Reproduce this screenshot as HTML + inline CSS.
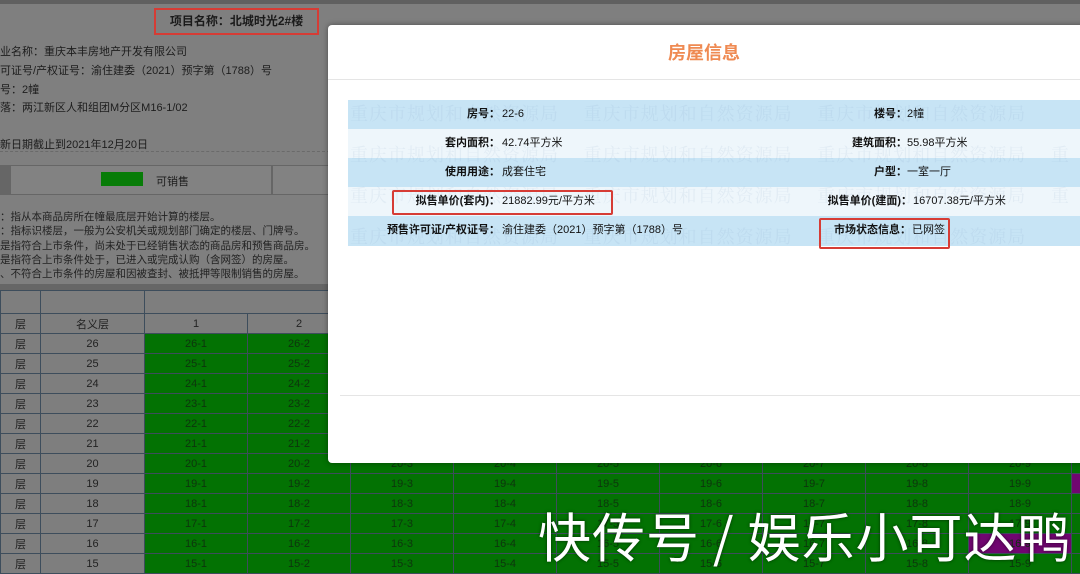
<!DOCTYPE html>
<html><head><meta charset="utf-8"><style>
*{margin:0;padding:0;box-sizing:border-box}
body{width:1080px;height:569px;overflow:hidden;position:relative;background:#7e7e7e;font-family:"Liberation Sans","Noto Sans CJK SC",sans-serif;color:#1a1a1a}
.top{position:absolute;left:0;top:0;width:1080px;height:290px;background:#7f7f7f;border-top:4px solid #606060}
.t{position:absolute;font-size:11px;color:#1d1d1d;white-space:nowrap}
.ttl{position:absolute;left:154px;top:4px;width:165px;height:27px;border:2px solid #d63c35;font-size:12px;font-weight:bold;text-align:center;line-height:23px}
.tab{position:absolute;top:161px;height:30px;border:1px solid #666;background:#828282}
.leg{position:absolute;font-size:10.5px;color:#222;left:0;line-height:14.3px;top:206px}
.band{position:absolute;left:0;top:284px;width:330px;height:8px;background:#666}
table.g{position:absolute;left:0;top:290px;border-collapse:collapse;table-layout:fixed;width:1091px}
table.g td{border:1px solid #3d4d5c;height:20px;font-size:11px;text-align:center;color:#222;padding:0;overflow:hidden;white-space:nowrap;background:#7e7e7e}
table.g tr.h td{height:23px}
table.g td.gr{background:#037203;color:#0d350d}
table.g td.pu{background:#700670;color:#0d350d}
.modal{position:absolute;left:328px;top:25px;width:760px;height:438px;background:#fff;border-radius:4px;box-shadow:0 0 6px rgba(0,0,0,.4)}
.mh{height:55px;border-bottom:1px solid #e5e5e5;text-align:center;font-size:18px;font-weight:bold;color:#ef8a52;line-height:56px;padding-right:8px}
.row{position:absolute;left:20px;width:740px;height:29px;font-size:11px;line-height:29px;white-space:nowrap}
.b{background:#c7e4f5}.l{background:#eef6fb}
.k{position:absolute;font-weight:bold;text-align:right;color:#111}
.v{position:absolute;color:#111}
.wm{position:absolute;font-size:18px;color:rgba(120,150,190,.10);white-space:nowrap;font-family:"Noto Serif CJK SC",serif;letter-spacing:1px}
.box{position:absolute;border:2px solid #d63c35;border-radius:2px}
.ft{position:absolute;left:12px;top:370px;width:740px;height:1px;background:#e5e5e5}
.big{position:absolute;left:538px;top:505px;font-size:53px;color:#fff;white-space:nowrap;font-family:"Noto Sans CJK SC",sans-serif;text-shadow:0 0 3px rgba(0,0,0,.6);letter-spacing:1px;line-height:60px}
</style></head><body>
<div class="top">
<div class="t" style="left:0;top:39px">业名称：重庆本丰房地产开发有限公司</div>
<div class="t" style="left:0;top:58px">可证号/产权证号：渝住建委（2021）预字第（1788）号</div>
<div class="t" style="left:0;top:77px">号：2幢</div>
<div class="t" style="left:0;top:95px">落：两江新区人和组团M分区M16-1/02</div>
<div class="t" style="left:0;top:132px">新日期截止到2021年12月20日</div>
<div style="position:absolute;left:0;top:147px;width:330px;border-top:1px dashed #6a6a6a"></div>
<div class="tab" style="left:-2px;width:12px;background:#666"></div>
<div class="tab" style="left:10px;width:262px"><div style="position:absolute;left:90px;top:6px;width:42px;height:14px;background:#087c08"></div><div class="t" style="left:145px;top:7px;font-size:11px">可销售</div></div>
<div class="tab" style="left:272px;width:60px"></div>
<div class="leg">：指从本商品房所在幢最底层开始计算的楼层。<br>：指标识楼层，一般为公安机关或规划部门确定的楼层、门牌号。<br>是指符合上市条件，尚未处于已经销售状态的商品房和预售商品房。<br>是指符合上市条件处于，已进入或完成认购（含网签）的房屋。<br>、不符合上市条件的房屋和因被查封、被抵押等限制销售的房屋。</div>
<div class="ttl">项目名称：北城时光2#楼</div>
</div>
<div class="band"></div>
<table class="g">
<colgroup><col style="width:40px"><col style="width:104px"><col style="width:103px"><col style="width:103px"><col style="width:103px"><col style="width:103px"><col style="width:103px"><col style="width:103px"><col style="width:103px"><col style="width:103px"><col style="width:103px"><col style="width:20px"></colgroup>
<tr class="h"><td></td><td></td><td colspan="10"></td></tr>
<tr><td>层</td><td>名义层</td><td>1</td><td>2</td><td>3</td><td>4</td><td>5</td><td>6</td><td>7</td><td>8</td><td>9</td><td></td></tr>
<tr><td>层</td><td>26</td><td class="gr">26-1</td><td class="gr">26-2</td><td class="gr">26-3</td><td class="gr">26-4</td><td class="gr">26-5</td><td class="gr">26-6</td><td class="gr">26-7</td><td class="gr">26-8</td><td class="gr">26-9</td><td class="gr"></td></tr>
<tr><td>层</td><td>25</td><td class="gr">25-1</td><td class="gr">25-2</td><td class="gr">25-3</td><td class="gr">25-4</td><td class="gr">25-5</td><td class="gr">25-6</td><td class="gr">25-7</td><td class="gr">25-8</td><td class="gr">25-9</td><td class="gr"></td></tr>
<tr><td>层</td><td>24</td><td class="gr">24-1</td><td class="gr">24-2</td><td class="gr">24-3</td><td class="gr">24-4</td><td class="gr">24-5</td><td class="gr">24-6</td><td class="gr">24-7</td><td class="gr">24-8</td><td class="gr">24-9</td><td class="gr"></td></tr>
<tr><td>层</td><td>23</td><td class="gr">23-1</td><td class="gr">23-2</td><td class="gr">23-3</td><td class="gr">23-4</td><td class="gr">23-5</td><td class="gr">23-6</td><td class="gr">23-7</td><td class="gr">23-8</td><td class="gr">23-9</td><td class="gr"></td></tr>
<tr><td>层</td><td>22</td><td class="gr">22-1</td><td class="gr">22-2</td><td class="gr">22-3</td><td class="gr">22-4</td><td class="gr">22-5</td><td class="gr">22-6</td><td class="gr">22-7</td><td class="gr">22-8</td><td class="gr">22-9</td><td class="gr"></td></tr>
<tr><td>层</td><td>21</td><td class="gr">21-1</td><td class="gr">21-2</td><td class="gr">21-3</td><td class="gr">21-4</td><td class="gr">21-5</td><td class="gr">21-6</td><td class="gr">21-7</td><td class="gr">21-8</td><td class="gr">21-9</td><td class="gr"></td></tr>
<tr><td>层</td><td>20</td><td class="gr">20-1</td><td class="gr">20-2</td><td class="gr">20-3</td><td class="gr">20-4</td><td class="gr">20-5</td><td class="gr">20-6</td><td class="gr">20-7</td><td class="gr">20-8</td><td class="gr">20-9</td><td class="gr"></td></tr>
<tr><td>层</td><td>19</td><td class="gr">19-1</td><td class="gr">19-2</td><td class="gr">19-3</td><td class="gr">19-4</td><td class="gr">19-5</td><td class="gr">19-6</td><td class="gr">19-7</td><td class="gr">19-8</td><td class="gr">19-9</td><td class="pu"></td></tr>
<tr><td>层</td><td>18</td><td class="gr">18-1</td><td class="gr">18-2</td><td class="gr">18-3</td><td class="gr">18-4</td><td class="gr">18-5</td><td class="gr">18-6</td><td class="gr">18-7</td><td class="gr">18-8</td><td class="gr">18-9</td><td class="gr"></td></tr>
<tr><td>层</td><td>17</td><td class="gr">17-1</td><td class="gr">17-2</td><td class="gr">17-3</td><td class="gr">17-4</td><td class="gr">17-5</td><td class="gr">17-6</td><td class="gr">17-7</td><td class="gr">17-8</td><td class="gr">17-9</td><td class="gr"></td></tr>
<tr><td>层</td><td>16</td><td class="gr">16-1</td><td class="gr">16-2</td><td class="gr">16-3</td><td class="gr">16-4</td><td class="gr">16-5</td><td class="gr">16-6</td><td class="gr">16-7</td><td class="gr">16-8</td><td class="pu">16-9</td><td class="gr"></td></tr>
<tr><td>层</td><td>15</td><td class="gr">15-1</td><td class="gr">15-2</td><td class="gr">15-3</td><td class="gr">15-4</td><td class="gr">15-5</td><td class="gr">15-6</td><td class="gr">15-7</td><td class="gr">15-8</td><td class="gr">15-9</td><td class="gr"></td></tr>
</table>
<div class="modal">
<div class="mh">房屋信息</div>
<div class="row b" style="top:75px"><span class="k" style="right:588px">房号：</span><span class="v" style="left:154px">22-6</span><span class="k" style="right:181px">楼号：</span><span class="v" style="left:559px">2幢</span></div>
<div class="row l" style="top:104px"><span class="k" style="right:588px">套内面积：</span><span class="v" style="left:154px">42.74平方米</span><span class="k" style="right:181px">建筑面积：</span><span class="v" style="left:559px">55.98平方米</span></div>
<div class="row b" style="top:133px"><span class="k" style="right:588px">使用用途：</span><span class="v" style="left:154px">成套住宅</span><span class="k" style="right:181px">户型：</span><span class="v" style="left:559px">一室一厅</span></div>
<div class="row l" style="top:162px"><span class="k" style="right:588px">拟售单价(套内)：</span><span class="v" style="left:154px">21882.99元/平方米</span><span class="k" style="right:176px">拟售单价(建面)：</span><span class="v" style="left:565px">16707.38元/平方米</span></div>
<div class="row b" style="top:191px;height:30px"><span class="k" style="right:588px">预售许可证/产权证号：</span><span class="v" style="left:154px">渝住建委（2021）预字第（1788）号</span><span class="k" style="right:177px">市场状态信息：</span><span class="v" style="left:564px">已网签</span></div>
<div class="wm" style="left:22px;top:75px">重庆市规划和自然资源局　 重庆市规划和自然资源局　 重庆市规划和自然资源局</div>
<div class="wm" style="left:22px;top:116px">重庆市规划和自然资源局　 重庆市规划和自然资源局　 重庆市规划和自然资源局　 重</div>
<div class="wm" style="left:22px;top:157px">重庆市规划和自然资源局　 重庆市规划和自然资源局　 重庆市规划和自然资源局　 重</div>
<div class="wm" style="left:22px;top:198px">重庆市规划和自然资源局　 重庆市规划和自然资源局　 重庆市规划和自然资源局</div>
<div class="box" style="left:64px;top:165px;width:221px;height:25px"></div>
<div class="box" style="left:491px;top:193px;width:131px;height:31px"></div>
<div class="ft"></div>
</div>
<div class="big">快传号 / 娱乐小可达鸭</div>
</body></html>
